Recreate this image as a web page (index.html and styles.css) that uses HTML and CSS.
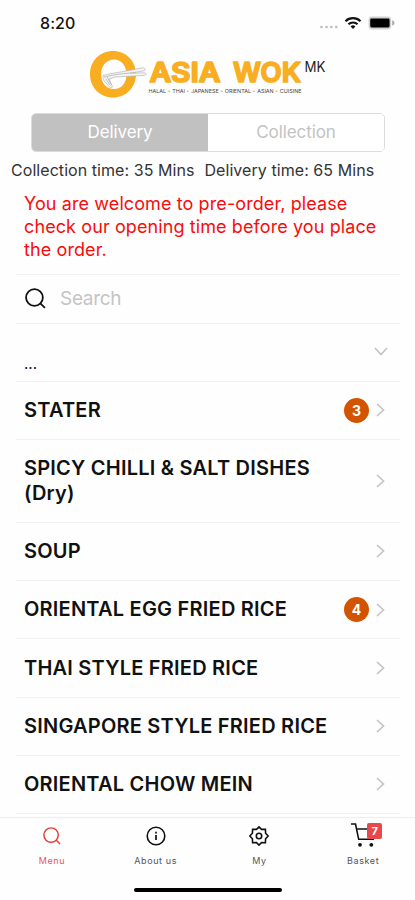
FILE: index.html
```html
<!DOCTYPE html>
<html lang="en">
<head>
<meta charset="utf-8">
<meta name="viewport" content="width=device-width, initial-scale=1">
<title>Asia Wok MK</title>
<link rel="stylesheet" href="styles.css">
</head>
<body>
<svg class="defs" width="0" height="0" aria-hidden="true">
  <symbol id="chevron" viewBox="0 0 10 16"><path d="M1 2 7.500 8 1 14"/></symbol>
  <symbol id="search" viewBox="0 0 20 20"><circle cx="9" cy="9" r="8"/><path d="m14.800 14.800 4.200 4.200"/></symbol>
</svg>
<div class="app">
  <header class="status">
    <span class="clock">8:20</span>
    <span class="signals">
      <svg width="20" height="18" viewBox="0 0 20 18" fill="#bdbdbd"><circle cx="3.500" cy="13" r="1.300"/><circle cx="8.500" cy="13" r="1.300"/><circle cx="13.300" cy="13" r="1.300"/><circle cx="18.300" cy="13" r="1.300"/></svg>
      <svg width="18" height="18" viewBox="0 0 18 18" fill="none" stroke="#111" stroke-width="2.1"><path d="M1.500 7.200a10.800 10.800 0 0 1 15 0M4.400 10.300a6.600 6.600 0 0 1 9.200 0"/><path d="m6.600 12.400 2.400 2.500 2.400-2.500a3.500 3.500 0 0 0-4.800 0z" fill="#111" stroke="none"/></svg>
      <svg width="27" height="18" viewBox="0 0 27 18"><rect x="-.4" y="2.400" width="22.600" height="13" rx="3.400" fill="#d0d0d0"/><rect x="1.200" y="4.600" width="19.400" height="8.800" rx="1.300"/><path d="M23.200 6.300c3 .9 3 4.500 0 5.400z" fill="#aaa"/></svg>
    </span>
  </header>

  <div class="brand">
    <svg width="240" height="52" viewBox="88 48 240 52">
      <path fill="#f8ae20" fill-rule="evenodd" d="M113 51c13 0 23 10 23 23.200S126 97.500 113 97.500 90 87.500 90 74.200 100 51 113 51zM114 59.500c-7.500 0-13 6.500-13 15s5.500 14.500 13 14.500 12.500-6 12.500-14.500-5-15-12.500-15z"/>
      <g stroke-linecap="round" stroke-linejoin="round">
        <path d="M103.500 75.500c6-2 12-2.500 20-4l19-3.700c3 0 3.500 2.200 1.500 3l-14 2.400 14-.4c3 .2 2.500 2.500 0 2.700l-29 1.500-6 2 3.500 8c-2 1.500-4-.5-5.500-3-3-3-5.500-6-3.500-8.500z" fill="#f4f4f4" stroke="#b5b5b5" stroke-width=".7"/>
        <path d="M104.500 77c9-2.500 16-3 25.500-4M106 79l4 6M107.500 77.500l3.500 6.500" fill="none" stroke="#aaa" stroke-width=".7"/>
      </g>
      <text class="brand-name" x="149.500" y="82" textLength="71" lengthAdjust="spacingAndGlyphs">ASIA</text>
      <text class="brand-name" x="233" y="82" textLength="68" lengthAdjust="spacingAndGlyphs">WOK</text>
      <text class="brand-mk" x="304.500" y="72" textLength="21" lengthAdjust="spacingAndGlyphs">MK</text>
      <text class="brand-line" x="148.500" y="93.300" textLength="153" lengthAdjust="spacingAndGlyphs">HALAL <tspan>•</tspan> THAI <tspan>•</tspan> JAPANESE <tspan>•</tspan> ORIENTAL <tspan>•</tspan> ASIAN <tspan>•</tspan> CUISINE</text>
    </svg>
  </div>

  <div class="segmented"><button class="segment segment-on">Delivery</button><button class="segment">Collection</button></div>
  <div class="times"><span>Collection time: 35 Mins</span><span>Delivery time: 65 Mins</span></div>
  <p class="notice">You are welcome to pre-order, please<br>check our opening time before you place<br>the order.</p>

  <main class="list">
    <div class="search"><svg width="21" height="21"><use href="#search"/></svg><span>Search</span></div>
    <div class="row more"><span class="dots">...</span><svg class="chev down" width="10" height="16"><use href="#chevron"/></svg></div>
    <div class="row"><span class="name">STATER</span><b class="count">3</b><svg class="chev" width="10" height="16"><use href="#chevron"/></svg></div>
    <div class="row double"><span class="name">SPICY CHILLI &amp; SALT DISHES<br>(Dry)</span><svg class="chev" width="10" height="16"><use href="#chevron"/></svg></div>
    <div class="row"><span class="name">SOUP</span><svg class="chev" width="10" height="16"><use href="#chevron"/></svg></div>
    <div class="row"><span class="name">ORIENTAL EGG FRIED RICE</span><b class="count">4</b><svg class="chev" width="10" height="16"><use href="#chevron"/></svg></div>
    <div class="row"><span class="name">THAI STYLE FRIED RICE</span><svg class="chev" width="10" height="16"><use href="#chevron"/></svg></div>
    <div class="row"><span class="name">SINGAPORE STYLE FRIED RICE</span><svg class="chev" width="10" height="16"><use href="#chevron"/></svg></div>
    <div class="row last"><span class="name">ORIENTAL CHOW MEIN</span><svg class="chev" width="10" height="16"><use href="#chevron"/></svg></div>
  </main>

  <nav class="tabs">
    <a class="tab tab-on"><svg width="18" height="18" viewBox="0 0 20 20"><use href="#search"/></svg><span>Menu</span></a>
    <a class="tab"><svg width="20" height="20" viewBox="0 0 20 20"><circle cx="10" cy="10" r="8.800"/><path d="M10 9v5M10 5.700v1.700" stroke-width="1.700"/></svg><span>About us</span></a>
    <a class="tab"><svg width="20" height="20" viewBox="0 0 20 20"><path d="M10 .9 12.500 3.400l3.900-.1.200 3.900L19.200 10l-2.600 2.800-.2 3.900-3.900-.1L10 19.100l-2.500-2.500-3.900.1-.2-3.900L.8 10l2.600-2.800.2-3.900 3.900.1z"/><circle cx="10" cy="10" r="2.700"/></svg><span>My</span></a>
    <a class="tab"><span class="cart"><svg width="26" height="26" viewBox="0 0 26 26"><path d="M1 2h4.500l3.200 15.300h14.500L25 7H6.500"/><g fill="#111" stroke="none"><circle cx="10" cy="22.800" r="1.900"/><circle cx="21.300" cy="22.800" r="1.900"/></g></svg><b class="cart-count">7</b></span><span>Basket</span></a>
  </nav>
  <div class="home"></div>
</div>
</body>
</html>
```
FILE: styles.css
```css
* { box-sizing: border-box; }
body { margin: 0; background: #fff; color: #111; font-family: Inter, "Liberation Sans", sans-serif; }
svg { display: block; flex: none; }
.defs { position: absolute; }
.app { width: 415px; height: 900px; overflow: hidden; display: flex; flex-direction: column; background: #fefefe; }
.status { height: 48px; padding: 14px 19px 0 40px; display: flex; justify-content: space-between; align-items: flex-start; }
.clock { font-size: 16px; line-height: 19px; font-weight: 500; letter-spacing: .1px; }
.signals { display: flex; gap: 7px; }
.signals svg { overflow: visible; }
.signals svg:first-child { margin-right: -1px; }
.brand { height: 65px; padding-left: 88px; }
.brand-name { font: 600 26.500px Inter, sans-serif; fill: #f8ae20; stroke: #f8ae20; stroke-width: 1.700px; stroke-linejoin: round; }
.brand-mk { font: 400 14px Inter, sans-serif; fill: #222; }
.brand-line { font: 400 5px Inter, sans-serif; fill: #444; }
.brand-line tspan { fill: #f8ae20; }

.segmented { width: 354px; height: 39px; margin-left: 31px; display: flex; border: 1px solid #dcdcdc; border-radius: 5px; overflow: hidden; flex: none; }
.segment { flex: 1; border: 0; padding: 0 0 1px; background: #fff; color: #c3c3c3; font: 400 17px Inter, sans-serif; letter-spacing: -.1px; }
.segment-on { background: #c1c1c1; color: #fff; }
.times { height: 38px; padding: 8px 0 0 11px; display: flex; gap: 10px; font-size: 16px; line-height: 20px; color: #333; white-space: nowrap; letter-spacing: .06px; flex: none; }
.notice { height: 84px; margin: 0; padding: 2px 0 0 24px; font-size: 18px; line-height: 23px; letter-spacing: .1px; color: #f80c0c; white-space: nowrap; flex: none; }

.list { margin: 0 15px 0 16px; height: 543px; flex: none; }
.search { height: 48.700px; border-top: 1px solid #f0f0f0; padding-left: 9px; display: flex; align-items: center; gap: 14px; font-size: 19px; letter-spacing: -.3px; color: #c4c4c4; }
.search svg { fill: none; stroke: #111; stroke-width: 1.700px; }
.row { height: 58.300px; border-top: 1px solid #f1f1f1; padding: 0 14px 0 8px; display: flex; align-items: center; gap: 7px; }
.row.more { height: 57.900px; }
.row.double { height: 82.900px; }
.row.last { height: 59px; border-bottom: 1px solid #f1f1f1; }
.name { flex: 1; font-size: 20px; line-height: 25px; font-weight: 600; letter-spacing: .22px; white-space: nowrap; }
.dots { flex: 1; font-size: 15px; padding-top: 22px; }
.chev { fill: none; stroke: #c4c4c4; stroke-width: 1.700px; }
.down { transform: rotate(90deg); margin-bottom: 1px; }
.count { width: 25px; height: 25px; border-radius: 50%; background: #d35400; color: #fff; font-size: 14px; line-height: 25px; text-align: center; }

.tabs { height: 71px; border-top: 1px solid #eee; display: grid; grid-template-columns: repeat(4, 1fr); flex: none; }
.tab { display: flex; flex-direction: column; align-items: center; font-size: 9px; color: #555; }
.tab svg { height: 20px; margin: 8px 0; fill: none; stroke: #111; stroke-width: 1.600px; }
.tab > span:last-child { line-height: 13px; letter-spacing: .6px; }
.tab-on { color: #e8554f; }
.tab.tab-on svg { stroke: #e33d36; }
.cart { position: relative; height: 36px; }
.tab .cart svg { height: 26px; margin: 4px 0 0; }
.cart-count { position: absolute; left: 17px; top: 5px; width: 15px; height: 16px; border-radius: 2px; background: #e9484b; color: #fff; font-size: 11px; line-height: 16px; text-align: center; }
.home { width: 148px; height: 4px; margin-left: 134px; border-radius: 2px; background: #000; }
```
